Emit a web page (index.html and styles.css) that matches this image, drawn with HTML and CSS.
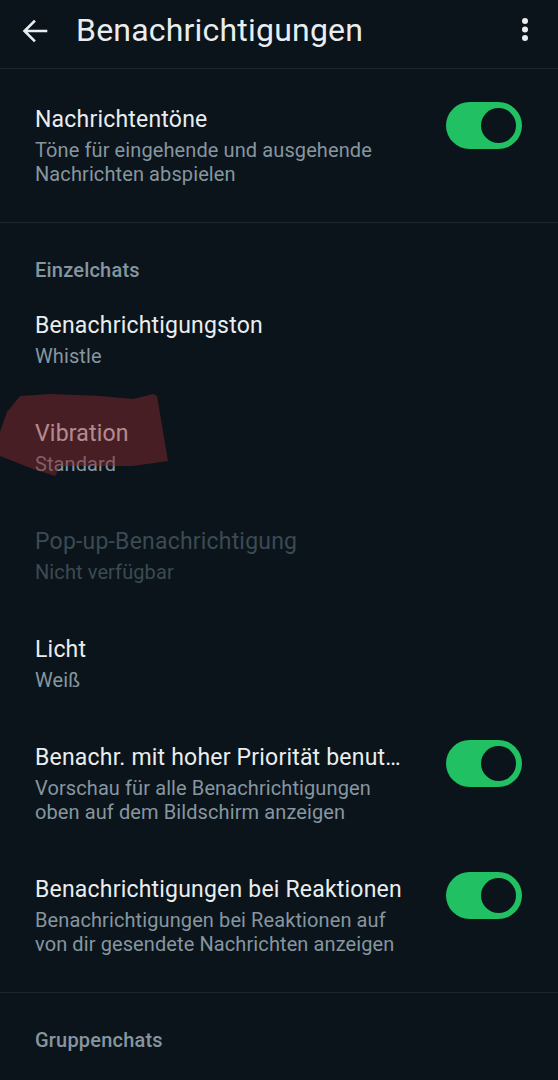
FILE: index.html
```html
<!DOCTYPE html>
<html lang="de">
<head>
  <meta charset="UTF-8">
  <title>Benachrichtigungen</title>
  <link rel="stylesheet" href="styles.css">
</head>
<body>
  <div class="screen">
    <header class="topbar">
      <svg class="back" width="26" height="24" viewBox="0 0 26 24">
        <path d="M24 12H3M12 2.5L2.5 12 12 21.5" fill="none" stroke="#e9edef" stroke-width="2.6" stroke-linecap="square"/>
      </svg>
      <h1 class="title">Benachrichtigungen</h1>
      <svg class="menu" width="8" height="26" viewBox="0 0 8 26">
        <circle cx="4" cy="4" r="3" fill="#e9edef"/>
        <circle cx="4" cy="12.5" r="3" fill="#e9edef"/>
        <circle cx="4" cy="21" r="3" fill="#e9edef"/>
      </svg>
    </header>

    <section class="group">
      <div class="row">
        <div class="text">
          <div class="label">Nachrichtentöne</div>
          <div class="sub">Töne für eingehende und ausgehende Nachrichten abspielen</div>
        </div>
        <span class="toggle"></span>
      </div>
    </section>

    <section class="group">
      <div class="heading">Einzelchats</div>
      <div class="row">
        <div class="text">
          <div class="label">Benachrichtigungston</div>
          <div class="sub">Whistle</div>
        </div>
      </div>
      <div class="row">
        <div class="text">
          <div class="label">Vibration</div>
          <div class="sub">Standard</div>
        </div>
        <!-- hand drawn marker over the item -->
        <svg class="scribble" width="170" height="90" viewBox="0 0 170 90">
          <polygon points="7,18 20,2 50,0 100,2 133,5 153,0 157,2 168,67 133,72 60,72 55,82 33,75 0,62 0,38" fill="rgba(130,40,46,0.5)"/>
        </svg>
      </div>
      <div class="row disabled">
        <div class="text">
          <div class="label">Pop-up-Benachrichtigung</div>
          <div class="sub">Nicht verfügbar</div>
        </div>
      </div>
      <div class="row">
        <div class="text">
          <div class="label">Licht</div>
          <div class="sub">Weiß</div>
        </div>
      </div>
      <div class="row">
        <div class="text">
          <div class="label">Benachr. mit hoher Priorität benutzen</div>
          <div class="sub">Vorschau für alle Benachrichtigungen oben auf dem Bildschirm anzeigen</div>
        </div>
        <span class="toggle"></span>
      </div>
      <div class="row">
        <div class="text">
          <div class="label">Benachrichtigungen bei Reaktionen</div>
          <div class="sub">Benachrichtigungen bei Reaktionen auf von dir gesendete Nachrichten anzeigen</div>
        </div>
        <span class="toggle"></span>
      </div>
    </section>

    <section class="group">
      <div class="heading">Gruppenchats</div>
    </section>
  </div>
</body>
</html>
```

FILE: styles.css
```css
html, body {
  margin: 0;
  padding: 0;
  height: 100%;
  background: #0b141a;
  font-family: Roboto, "Noto Sans", sans-serif;
  overflow: hidden;
}

.screen {
  width: 558px;
  height: 1080px;
  overflow: hidden;
}

/* ─────────── Top bar ─────────── */
.topbar {
  height: 68px;
  display: flex;
  align-items: center;
  padding: 0 29px 0 22px;
  border-bottom: 1px solid #1c262d;
}
.back {
  flex: none;
  margin-top: -6px;
}
.title {
  flex: 1;
  margin: -8px 0 0 28px;
  font-size: 32px;
  font-weight: 400;
  color: #e9edef;
  letter-spacing: 0.2px;
}
.menu {
  flex: none;
  margin-top: -8px;
}

/* ─────────── Groups ─────────── */
.group {
  padding: 11px 0 10px;
  border-bottom: 1px solid #1c262d;
}
.group:last-child {
  border-bottom: none;
}

.heading {
  padding: 24px 35px 4px;
  font-size: 20px;
  line-height: 24px;
  font-weight: 500;
  color: #8696a0;
  letter-spacing: 0.2px;
}

.row {
  position: relative;
  display: flex;
  align-items: flex-start;
  padding: 26px 36px 26px 35px;
  gap: 38px;
}
.text {
  flex: 1;
  min-width: 0;
}
.label {
  font-size: 23px;
  line-height: 28px;
  color: #e9edef;
  letter-spacing: 0.2px;
  white-space: nowrap;
  overflow: hidden;
  text-overflow: ellipsis;
}
.sub {
  margin-top: 4px;
  font-size: 20px;
  line-height: 24px;
  color: #8696a0;
  letter-spacing: 0.1px;
}
.row.disabled .label,
.row.disabled .sub {
  color: #3b4a53;
}

/* switch, always on in this screen */
.toggle {
  flex: none;
  position: relative;
  width: 76px;
  height: 47px;
  border-radius: 24px;
  background: #21c063;
  margin-top: -4px;
}
.toggle::after {
  content: "";
  position: absolute;
  top: 6px;
  right: 6px;
  width: 35px;
  height: 35px;
  border-radius: 50%;
  background: #0b141a;
}

.scribble {
  position: absolute;
  left: 0;
  top: 0;
  pointer-events: none;
}
```
